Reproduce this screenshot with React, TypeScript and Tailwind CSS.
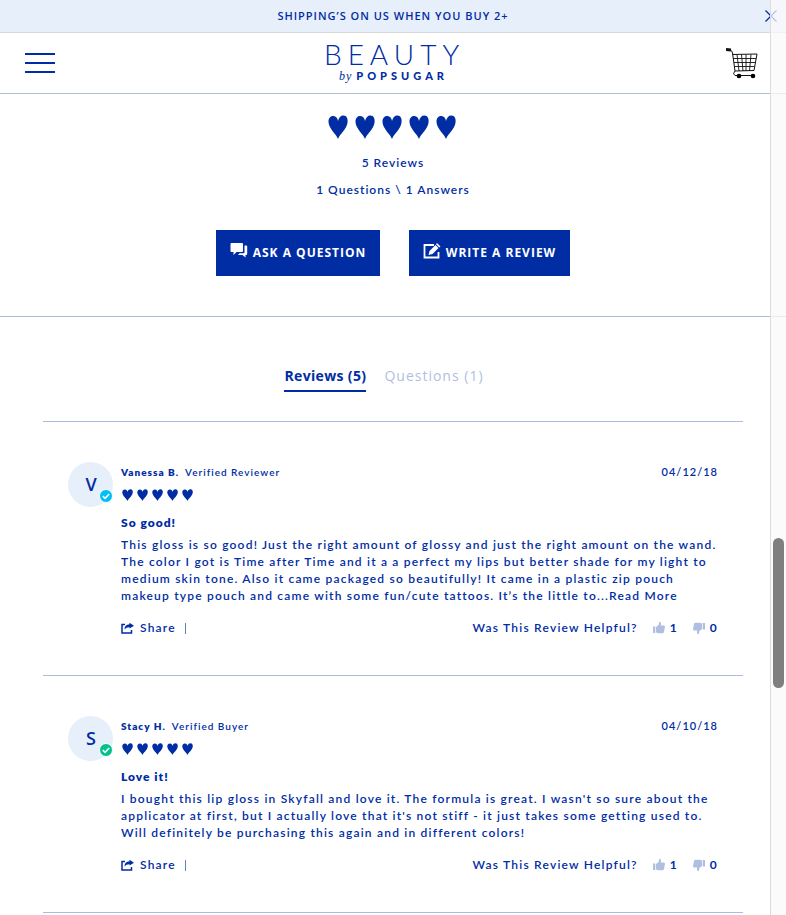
import React from "react";

const HEART = "M10 24C8.5 19 1 14.5 .5 7C.3 2.5 3.2 .8 5.5 1C8 1.2 9.6 3.2 10 6C10.8 2.2 13 .2 15.6 .4C18.4 .6 20 3 19.6 7C18.8 14.5 12 18.5 10 24Z";

function Hearts({ large = false }: { large?: boolean }) {
  return (
    <div role="img" aria-label="5 out of 5" className={large ? "flex h-6 justify-center gap-[7px] pr-0.5" : "flex h-3 gap-1"}>
      {[1, 2, 3, 4, 5].map((n) => (
        <svg key={n} viewBox="0 0 20 24" preserveAspectRatio="none" className={large ? "h-6 w-5" : "h-3 w-[11px]"} fill="#002da4">
          <path d={HEART} />
        </svg>
      ))}
    </div>
  );
}

function Thumb({ down = false }: { down?: boolean }) {
  return (
    <svg viewBox="0 0 12 12" className={down ? "size-3 rotate-180" : "size-3"} fill="#b0bfe1">
      <path d="M0 4.5h2.3V11H0zM3 5 5.8 2.8 6 0h1.2Q8.4.8 7.8 3.6h3.4q1 .3.7 1.6L11 10q-.3 1.2-1.6 1.2H5.2L3 10.4z" />
    </svg>
  );
}

type Review = {
  name: string;
  role: string;
  badge: string;
  date: string;
  title: string;
  lines: string[];
  more: boolean;
};

const reviews: Review[] = [
  {
    name: "Vanessa B.",
    role: "Verified Reviewer",
    badge: "bg-[#00bff5]",
    date: "04/12/18",
    title: "So good!",
    lines: [
      "This gloss is so good! Just the right amount of glossy and just the right amount on the wand.",
      "The color I got is Time after Time and it a a perfect my lips but better shade for my light to",
      "medium skin tone. Also it came packaged so beautifully! It came in a plastic zip pouch",
      "makeup type pouch and came with some fun/cute tattoos. It’s the little to...",
    ],
    more: true,
  },
  {
    name: "Stacy H.",
    role: "Verified Buyer",
    badge: "bg-[#00c28a]",
    date: "04/10/18",
    title: "Love it!",
    lines: [
      "I bought this lip gloss in Skyfall and love it. The formula is great. I wasn't so sure about the",
      "applicator at first, but I actually love that it's not stiff - it just takes some getting used to.",
      "Will definitely be purchasing this again and in different colors!",
    ],
    more: false,
  },
];

function ReviewItem({ r }: { r: Review }) {
  return (
    <article className="flex gap-2 border-b border-[#abbcdf] px-[25px] pt-10 pb-[37px]">
      <div className="relative flex size-[45px] shrink-0 items-center justify-center rounded-full bg-[#e7effb] pb-0.5 pl-0.5 font-['Open_Sans',sans-serif] text-lg font-semibold">
        {r.name[0]}
        <span className={`absolute right-0 bottom-1 flex size-[14px] items-center justify-center rounded-full border border-white ${r.badge}`}>
          <svg viewBox="0 0 10 10" className="size-2" fill="none" stroke="#fff" strokeWidth="2">
            <path d="M1 5.2 3.8 8 9 2.5" />
          </svg>
        </span>
      </div>
      <div className="min-w-0 grow">
        <div className="flex h-5 items-center justify-between text-[10px] font-semibold">
          <p className="flex gap-[6px]">
            <b className="font-extrabold">{r.name}</b>
            <span>{r.role}</span>
          </p>
          <time className="text-[11px]">{r.date}</time>
        </div>
        <div className="pt-[7px] pl-px">
          <Hearts />
        </div>
        <h3 className="mt-[13px] text-xs leading-[18px] font-extrabold">{r.title}</h3>
        <p className="mt-1 text-xs leading-[17px] font-semibold tracking-widest">
          {r.lines.map((line, i) => (
            <span key={line} className="block whitespace-nowrap">
              {line}
              {r.more && i === r.lines.length - 1 && <a href="#more">Read More</a>}
            </span>
          ))}
        </p>
        <div className="mt-[14px] flex h-5 items-center justify-between text-xs font-semibold tracking-widest">
          <div className="flex items-center">
            <button type="button" className="flex items-center gap-1.5">
              <svg viewBox="0 0 13 12" className="h-3 w-[13px]" fill="none" stroke="#002da4" strokeWidth="1.5">
                <path d="M4 2.500H1V11h9.500V8" />
                <path d="M8.500 .8 13 3.700 8.500 6.500V5.200Q5.500 5 3.500 7.500Q3.500 2.800 8.500 2.300z" fill="#002da4" stroke="none" />
              </svg>
              Share
            </button>
            <span className="ml-[9px] h-[11px] w-px bg-[#5f7fc4]" />
          </div>
          <div className="flex items-center">
            <span>Was This Review Helpful?</span>
            <button type="button" aria-label="Helpful" className="ml-[15px] flex items-center gap-[5px] font-bold">
              <Thumb />1
            </button>
            <button type="button" aria-label="Not helpful" className="ml-[15px] flex items-center gap-[5px] font-bold">
              <Thumb down />0
            </button>
          </div>
        </div>
      </div>
    </article>
  );
}

export default function App() {
  return (
    <div className="relative w-full bg-white font-[Lato,sans-serif] tracking-[1px] text-[#002da4]">
      <div className="relative flex h-8 items-center justify-center bg-[#e7effb] font-['Open_Sans',sans-serif] text-[11px] font-semibold">
        SHIPPING’S ON US WHEN YOU BUY 2+
        <button type="button" aria-label="Close" className="absolute right-[9px] top-[10px]">
          <svg viewBox="0 0 12 12" className="size-3" stroke="#002da4" strokeWidth="1.300">
            <path d="m.5.5 11 11m0-11-11 11" />
          </svg>
        </button>
      </div>
      <header className="flex h-[62px] items-center justify-between border-t border-b border-t-[#d8d8d8] border-b-[#b3bfdc] pl-[25px] pr-7">
        <button type="button" aria-label="Menu" className="flex w-8 flex-col gap-[7px] pr-0.5">
          <span className="h-0.5 w-[30px] bg-[#002da4]" />
          <span className="h-0.5 w-[30px] bg-[#002da4]" />
          <span className="h-0.5 w-[30px] bg-[#002da4]" />
        </button>
        <a href="#home" className="flex flex-col items-center pb-1.5">
          <span className="pl-1.5 text-[28px] leading-8 font-light tracking-[6px]">BEAUTY</span>
          <span className="flex items-center gap-1 pl-1 text-[11px] leading-3 font-black tracking-[4px]">
            <i className="font-['Liberation_Serif',serif] text-xs leading-3 font-normal tracking-[1px]">by</i>
            POPSUGAR
          </span>
        </a>
        <button type="button" aria-label="Cart">
          <svg viewBox="0 0 32 32" className="size-8" fill="none" stroke="#111">
            <path d="M0 2.500 5 3" strokeWidth="2.800" />
            <path d="M4 2.500Q6 3.500 6.500 6L9 24M6.500 7.500 31 7 28 23.500 9 24Q6 27 9 28.500H28" />
            <path d="M7 11.500h23M8 15.500h21.500M8.500 19.500h20M11 7.500 13 24M15.500 7.500 17 24M20 7.500V24M25 7.500 23.500 24" strokeWidth=".9" />
            <circle cx="13" cy="29" r="2.300" fill="#000" stroke="none" />
            <circle cx="27" cy="29" r="2.300" fill="#000" stroke="none" />
          </svg>
        </button>
      </header>
      <section className="border-b border-[#abbcdf] pt-[21px] pb-10 text-center text-xs font-semibold">
        <Hearts large />
        <p className="mt-[15px] leading-[18px]">5 Reviews</p>
        <p className="mt-[9px] leading-[18px]">1 Questions \ 1 Answers</p>
        <div className="mt-[31px] flex justify-center gap-[29px]">
          <button type="button" className="flex h-[46px] w-[164px] items-center justify-center gap-[5px] bg-[#002da4] font-['Open_Sans',sans-serif] font-bold text-white">
            <svg viewBox="0 0 18 16" className="mb-1 h-4 w-[18px] shrink-0" fill="#fff">
              <path d="M1.500 0H12q1 0 1 1v7q0 1-1 1H6.500L3.500 12V9h-2Q.5 9 .5 8V1q0-1 1-1z" />
              <path d="M14.500 2.500h1.700q1 0 1 1v7.500q0 1-1 1h-.7v2.500L12.500 12H8l1.500-1.700h4q1 0 1-1z" />
            </svg>
            ASK A QUESTION
          </button>
          <button type="button" className="flex h-[46px] w-[161px] items-center justify-center gap-[5px] bg-[#002da4] font-['Open_Sans',sans-serif] font-bold text-white">
            <svg viewBox="0 0 18 16" className="mb-1 h-4 w-[18px] shrink-0" fill="none" stroke="#fff" strokeWidth="1.800">
              <path d="M11 2H1.500v12.500h14V9" />
              <path d="m5.500 12 1-4 6-6 3 3-6 6zM13 1.200l1-1.200 3.500 3.500-1.200 1z" fill="#fff" stroke="none" />
            </svg>
            WRITE A REVIEW
          </button>
        </div>
      </section>
      <main className="mx-auto w-full max-w-[700px]">
        <div role="tablist" className="flex justify-center gap-[18px] border-b border-[#abbcdf] pt-[49px] pb-[29px] pr-[18px] font-['Open_Sans',sans-serif] text-sm">
          <button type="button" role="tab" aria-selected="true" className="border-b-2 border-[#002da4] pb-1 font-bold tracking-wide">
            Reviews (5)
          </button>
          <button type="button" role="tab" aria-selected="false" className="border-b-2 border-transparent pb-1 tracking-[1px] text-[#b0bfe1]">
            Questions (1)
          </button>
        </div>
        {reviews.map((r) => (
          <ReviewItem key={r.name} r={r} />
        ))}
      </main>
      <div aria-hidden="true" className="fixed inset-y-0 right-0 w-4 border-l border-[#dcdcdc] bg-[#fafafa]/75">
        <div className="absolute right-0.5 top-[538px] h-[150px] w-[11px] rounded-full bg-[#7f7f7f]" />
      </div>
    </div>
  );
}
